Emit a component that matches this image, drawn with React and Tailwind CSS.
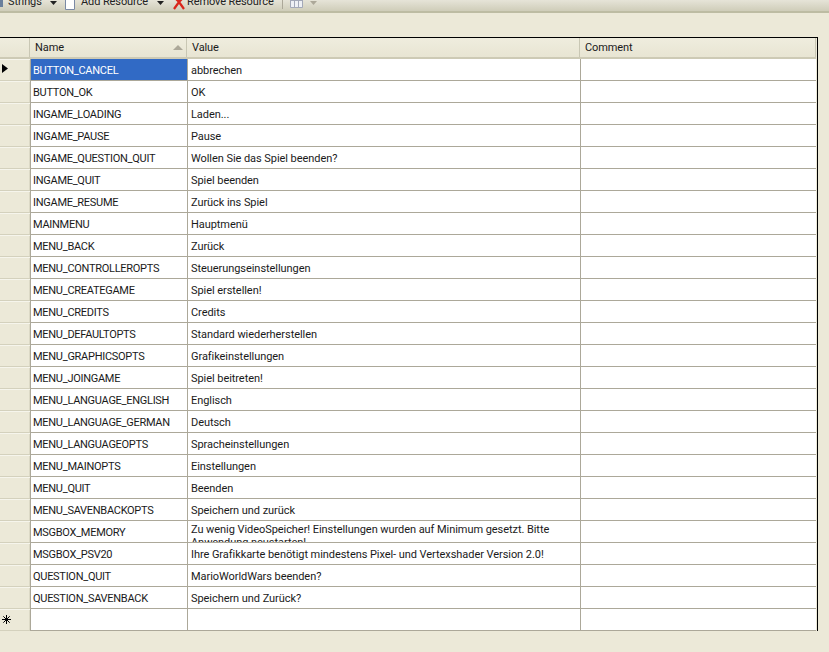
import React from "react";

const ROWS = [
  ["BUTTON_CANCEL", "abbrechen"],
  ["BUTTON_OK", "OK"],
  ["INGAME_LOADING", "Laden..."],
  ["INGAME_PAUSE", "Pause"],
  ["INGAME_QUESTION_QUIT", "Wollen Sie das Spiel beenden?"],
  ["INGAME_QUIT", "Spiel beenden"],
  ["INGAME_RESUME", "Zurück ins Spiel"],
  ["MAINMENU", "Hauptmenü"],
  ["MENU_BACK", "Zurück"],
  ["MENU_CONTROLLEROPTS", "Steuerungseinstellungen"],
  ["MENU_CREATEGAME", "Spiel erstellen!"],
  ["MENU_CREDITS", "Credits"],
  ["MENU_DEFAULTOPTS", "Standard wiederherstellen"],
  ["MENU_GRAPHICSOPTS", "Grafikeinstellungen"],
  ["MENU_JOINGAME", "Spiel beitreten!"],
  ["MENU_LANGUAGE_ENGLISH", "Englisch"],
  ["MENU_LANGUAGE_GERMAN", "Deutsch"],
  ["MENU_LANGUAGEOPTS", "Spracheinstellungen"],
  ["MENU_MAINOPTS", "Einstellungen"],
  ["MENU_QUIT", "Beenden"],
  ["MENU_SAVENBACKOPTS", "Speichern und zurück"],
  ["MSGBOX_MEMORY", "Zu wenig VideoSpeicher! Einstellungen wurden auf Minimum gesetzt. Bitte Anwendung neustarten!"],
  ["MSGBOX_PSV20", "Ihre Grafikkarte benötigt mindestens Pixel- und Vertexshader Version 2.0!"],
  ["QUESTION_QUIT", "MarioWorldWars beenden?"],
  ["QUESTION_SAVENBACK", "Speichern und Zurück?"],
];

const Caret = ({ className = "" }) => (
  <svg width="7" height="4" viewBox="0 0 7 4" className={className}>
    <path d="M0 0h7L3.5 4z" fill="#222" />
  </svg>
);

function Toolbar() {
  return (
    <div className="h-[13px] overflow-hidden relative bg-gradient-to-b from-[#e6e4d8] to-[#cfcdb9] border-b-2 border-[#bdbca3]">
      <div className="absolute left-0 top-[-6px] h-[16px] flex items-center text-[#222] tracking-[-0.1px]">
        <div className="w-[3px] h-[10px] bg-[#6a7f9c]" />
        <span className="ml-[5px] w-[33px]">Strings</span>
        <Caret className="ml-[9px] mt-[1px]" />
        <svg width="12" height="16" viewBox="0 0 12 16" className="ml-[7px] mt-[-1px]">
          <path d="M1.5 0.5h9v15h-9z" fill="#fff" stroke="#7b8aa5" />
        </svg>
        <span className="ml-[5px] w-[66px] whitespace-nowrap">Add Resource</span>
        <Caret className="ml-[10px] mt-[1px]" />
        <svg width="14" height="14" viewBox="0 0 14 14" className="ml-[8px] mt-[1px]">
          <path d="M2 1l5 5 5-5M2 13l5-7 5 7" fill="none" stroke="#d9261c" strokeWidth="2.2" />
        </svg>
        <span className="ml-[1px] w-[87px] whitespace-nowrap">Remove Resource</span>
        <div className="ml-[8px] w-px h-[14px] bg-[#aca899]" />
        <svg width="13" height="14" viewBox="0 0 13 14" className="ml-[7px] mt-[-2px]">
          <path d="M0.5 0.5h12v13h-12zM0.5 6.5h12M4.5 6.5v7M8.5 6.5v7" fill="#eef0f5" stroke="#a3a8b8" />
        </svg>
        <svg width="7" height="4" viewBox="0 0 7 4" className="ml-[7px] mt-[1px]">
          <path d="M0 0h7L3.5 4z" fill="#aca899" />
        </svg>
      </div>
    </div>
  );
}

function HeaderCell({ width, children }) {
  return (
    <div className={`${width} h-full relative flex items-center pl-[5px] pt-[2px] tracking-[-0.1px] border-r border-[#c9c7b4]`}>
      {children}
    </div>
  );
}

function Row({ name, value, selected, marker }) {
  return (
    <div className="flex h-[22px]">
      <div className="w-[30px] shrink-0 flex items-center pl-[2px] border-b border-[#d4d1bd] border-t border-t-[#f6f5ec] bg-[#ece9d8] shadow-[inset_-1px_0_0_#dcd9c6]">
        {marker}
      </div>
      <div className="w-[157px] shrink-0 border-l border-[#aca899] border-b border-b-[#aca899] bg-white">
        <div className={`h-[21px] pl-[2px] pt-[5px] leading-[13px] whitespace-nowrap tracking-[-0.28px] ${selected ? "bg-[#316ac5] text-white" : ""}`}>
          {name}
        </div>
      </div>
      <div className="w-[393px] shrink-0 h-[22px] overflow-hidden pl-[3px] pr-[20px] border-l border-[#aca899] border-b border-b-[#aca899] bg-white tracking-[-0.06px]">
        <div className={`${value && value.length > 80 ? "pt-[2px]" : "pt-[5px]"} leading-[13px]`}>{value}</div>
      </div>
      <div className="w-[236px] shrink-0 border-l border-[#aca899] border-b border-b-[#aca899] bg-white" />
    </div>
  );
}

export default function App() {
  return (
    <div className="w-[829px] h-[652px] overflow-hidden bg-[#ece9d8] text-[11px] text-[#1a1a1a] font-['Roboto',sans-serif]">
      <Toolbar />
      <div className="mt-[24px] w-[818px] border-t border-r border-black bg-[#ece9d8] pr-px">
        <div className="h-[21px] flex border-b-2 border-[#cdcab5] bg-gradient-to-b from-[#efedde] to-[#e8e5d3]">
          <div className="w-[30px] shrink-0 border-r border-[#c9c7b4]" />
          <HeaderCell width="w-[157px] shrink-0">
            Name
            <svg width="10" height="5" viewBox="0 0 10 5" className="absolute right-[3px] top-[7px]">
              <path d="M5 0l5 5H0z" fill="#aca899" />
            </svg>
          </HeaderCell>
          <HeaderCell width="w-[393px] shrink-0">Value</HeaderCell>
          <HeaderCell width="flex-1">Comment</HeaderCell>
        </div>
        {ROWS.map(([name, value], i) => (
          <Row
            key={name}
            name={name}
            value={value}
            selected={i === 0}
            marker={
              i === 0 ? (
                <svg width="6" height="9" viewBox="0 0 6 9" className="mb-[3px]">
                  <path d="M0 0l6 4.5L0 9z" fill="#000" />
                </svg>
              ) : null
            }
          />
        ))}
        <Row
          name=""
          value=""
          marker={
            <svg width="9" height="9" viewBox="0 0 9 9" className="mb-[1px]">
              <path d="M4.5 0v9M0 4.5h9M1.3 1.3l6.4 6.4M7.7 1.3L1.3 7.7" stroke="#000" strokeWidth="1" />
            </svg>
          }
        />
      </div>
    </div>
  );
}
